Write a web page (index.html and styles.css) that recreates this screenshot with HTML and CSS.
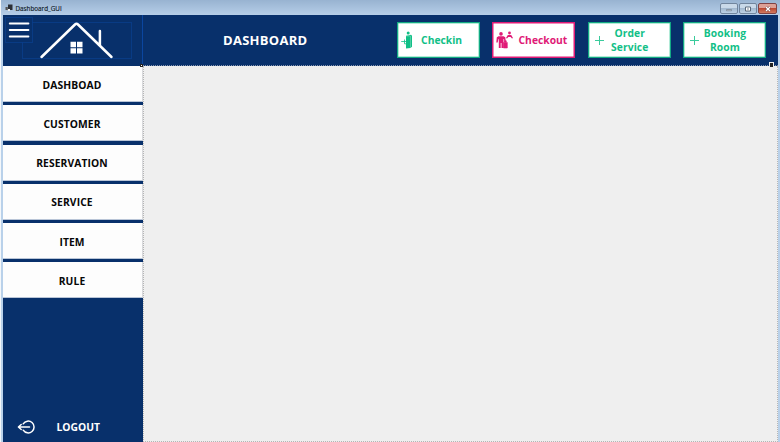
FILE: index.html
```html
<!DOCTYPE html>
<html lang="en">
<head>
<meta charset="utf-8">
<title>Dashboard_GUI</title>
<link rel="stylesheet" href="styles.css">
</head>
<body>
<div class="window">
  <header class="titlebar">
    <svg class="app-icon" width="8" height="8" viewBox="0 0 8 8"><path d="M3 .5H7.500v5.500H3z" fill="#2b2f35"/><path d="M.5 3h2.300v3H.5z" fill="#555"/><path d="M3 5h2v2H3z" fill="#eee"/></svg>
    <span class="caption">Dashboard_GUI</span>
    <div class="controls">
      <span class="control"><svg width="8" height="6"><path d="M1.500 3.500h5v1.200h-5z" fill="#fff" stroke="#667587" stroke-width=".7"/></svg></span>
      <span class="control"><svg width="8" height="6"><path d="M1.500 1h5v4h-5z" fill="#fff" stroke="#59687b"/><path d="M3.200 2.600h1.600v.8H3.200z" fill="#59687b"/></svg></span>
      <span class="control close"><svg width="8" height="6"><path d="M2 1l4 4M6 1L2 5" stroke="#69393b" stroke-width="2.400"/><path d="M2 1l4 4M6 1L2 5" stroke="#fff" stroke-width="1.400"/></svg></span>
    </div>
  </header>
  <div class="client">
    <aside class="sidebar">
      <div class="brand">
        <svg width="139" height="51" viewBox="3 15 139 51" fill="none">
          <path d="M22.500 22.500h109v36h-109z" stroke="#0b469f" stroke-dasharray="1 1"/>
          <path d="M5.500 17.500h27v25h-27z" fill="#08306b" stroke="#0b469f" stroke-dasharray="1 1"/>
          <path d="M9.800 23.600h18.600M9.800 30h18.600M9.800 36.500h18.600" stroke="#fff" stroke-width="2" stroke-linecap="round"/>
          <path d="M41.500 57L75 24.500Q76.500 23 78 24.500L111.500 57M99.900 31v14.500" stroke="#fff" stroke-width="2.500" stroke-linecap="round" stroke-linejoin="round"/>
          <path d="M70.500 41.700h5.500v5.500h-5.500zM77 41.700h5.500v5.500h-5.500zM70.500 48.200h5.500v5.300h-5.500zM77 48.200h5.500v5.300h-5.500z" fill="#fff"/>
        </svg>
      </div>
      <nav class="menu">
        <a class="item">DASHBOAD</a>
        <a class="item">CUSTOMER</a>
        <a class="item">RESERVATION</a>
        <a class="item">SERVICE</a>
        <a class="item">ITEM</a>
        <a class="item">RULE</a>
      </nav>
      <a class="logout">
        <svg width="20" height="16" viewBox="0 0 20 16" fill="none" stroke="#fff" stroke-width="1.500" stroke-linecap="round" stroke-linejoin="round"><path d="M6.200 4.800A5.900 5.900 0 1 1 6.200 11.200M12.500 8H1.500M4.200 5.500L1.400 8l2.800 2.500"/></svg>
        <span>LOGOUT</span>
      </a>
    </aside>
    <main class="main">
      <div class="topbar">
        <h1 class="heading">DASHBOARD</h1>
        <div class="actions">
          <button class="action checkin">
            <svg width="12" height="18" viewBox="0 0 12 18" fill="#12bf87"><circle cx="7.200" cy="1.900" r="1.500"/><path d="M5 5l5-1.200 1 1v11L9.500 17 5 17.400z"/><path d="M5 5h4.500v12" fill="none" stroke="#65d5b0" stroke-width=".7"/><path d="M.2 10.500h6M3.500 8.500v4.300h2" fill="none" stroke="#12bf87" stroke-width=".8"/></svg>
            <span>Checkin</span>
          </button>
          <button class="action checkout">
            <svg width="18" height="18" viewBox="0 0 18 18" fill="#e01a76"><circle cx="5" cy="2.900" r="1.800"/><path d="M2.500 5.300h5l1.800 1 .6 5.500H8.600L8 8h-.5v9H5.500v-5h-.8v5H2.800V8h-.4l-.7 3.500H.3l.5-5.200z"/><path d="M7.500 11.500h3.800V17H7.500zM8.500 11V9.800h1.800V11" stroke="#e01a76" stroke-width=".6"/><circle cx="13.500" cy="2" r="1.400"/><path d="M10 7l1.800-3h3.400L17 7l-1 .6-1.400-1.500h-2.200L11 7.600z"/></svg>
            <span>Checkout</span>
          </button>
          <button class="action order">
            <svg width="9" height="9"><path d="M4.500 0v9M0 4.500h9" stroke="#3acb9c"/></svg>
            <span>Order<br>Service</span>
          </button>
          <button class="action booking">
            <svg width="9" height="9"><path d="M4.500 0v9M0 4.500h9" stroke="#3acb9c"/></svg>
            <span>Booking<br>Room</span>
          </button>
        </div>
      </div>
      <section class="content"></section>
    </main>
  </div>
  <i class="grip"></i>
  <i class="smart-tag"></i>
</div>
</body>
</html>
```
FILE: styles.css
```css
* { box-sizing: border-box; }
body { margin: 0; font-family: "Open Sans", "Noto Sans", sans-serif; }
svg { display: block; flex: none; }
.window {
  position: relative;
  width: 780px;
  height: 442px;
  overflow: hidden;
  display: flex;
  flex-direction: column;
  background: #b9d1ea;
  border-left: 1px solid #f4f7fa;
}
.titlebar {
  height: 15px;
  flex: none;
  display: flex;
  align-items: center;
  padding: 1px 2px 0 4px;
  background: linear-gradient(#98b3d1, #b6cee8);
}
.caption {
  margin: 2px 0 0 2.5px;
  font-size: 6.3px;
  line-height: 8px;
  color: #101a28;
  -webkit-text-stroke: .15px #101a28;
}
.controls {
  display: flex;
  gap: 1px;
  margin: 2px 1px 0 auto;
  align-self: flex-start;
}
.control {
  width: 18px;
  height: 11px;
  display: flex;
  align-items: center;
  justify-content: center;
  border: 1px solid #71859d;
  border-radius: 2px;
  background: linear-gradient(#c9d9e9 45%, #a3b9d0 50%, #bdd2e6);
}
.close {
  width: 19px;
  border-color: #804344;
  background: linear-gradient(#dda095 45%, #bd4932 50%, #d17b60);
}
.client {
  flex: 1;
  display: flex;
  min-height: 0;
  margin: 0 2px;
}
.sidebar {
  width: 140px;
  flex: none;
  display: flex;
  flex-direction: column;
  background: #08306b;
}
.brand { height: 51px; border-right: 1px solid #0b469f; }
.menu {
  display: flex;
  flex-direction: column;
  gap: 3.25px;
}
.item {
  height: 36px;
  display: flex;
  align-items: center;
  justify-content: center;
  padding: 2px 1px 0 0;
  border-right: 1px solid #d8d9dc;
  border-bottom: 1px solid #b9c5d7;
  background: #fdfdfd;
  color: #080808;
  font-size: 10.3px;
  font-weight: 700;
  letter-spacing: .1px;
}
.logout {
  height: 16px;
  display: flex;
  align-items: center;
  gap: 20px;
  margin: auto 0 7.5px 13.5px;
  color: #fff;
  font-size: 10.3px;
  font-weight: 700;
}
.main { flex: 1; display: flex; flex-direction: column; }
.topbar {
  height: 51px;
  flex: none;
  display: flex;
  justify-content: space-between;
  padding: 0 12px 0 80px;
  background: #08306b;
  border-bottom: 1px dotted #8494b0;
}
.heading {
  margin: 0;
  color: #fff;
  font-size: 13px;
  line-height: 50px;
  font-weight: 700;
  letter-spacing: .28px;
}
.actions { display: flex; gap: 12.3px; padding-top: 7px; }
.action {
  width: 83px;
  height: 36px;
  display: flex;
  align-items: center;
  padding: 0 0 0 3px;
  border: 1px solid #12a983;
  box-shadow: inset 0 0 0 .5px #65d5b0;
  background: #fff;
  color: #12bf87;
  font: 700 10.3px/14px "Open Sans", "Noto Sans", sans-serif;
}
.action span { flex: 1; text-align: center; }
.checkin span { padding-right: 9px; }
.checkout { border-color: #e01a76; box-shadow: inset 0 0 0 .5px #e01a76; color: #e01a76; }
.checkout span { padding-right: 3px; }
.order, .booking { padding-left: 6px; }
.order span { padding-right: 18px; letter-spacing: .1px; margin-left: 4px; }
.booking span { padding-right: 16px; letter-spacing: .1px; margin-left: 2px; }
.content {
  flex: 1;
  background: #efefef;
  border: 1px dotted #b5b5b5;
  border-top: 0;
}
.grip {
  position: absolute;
  left: 139px;
  top: 64px;
  width: 3px;
  height: 3px;
  border: 1px solid #222;
  background: #fff;
}
.smart-tag {
  position: absolute;
  left: 768px;
  top: 62px;
  width: 5px;
  height: 6px;
  border: 1px solid #eee;
  background: #222;
}
```
